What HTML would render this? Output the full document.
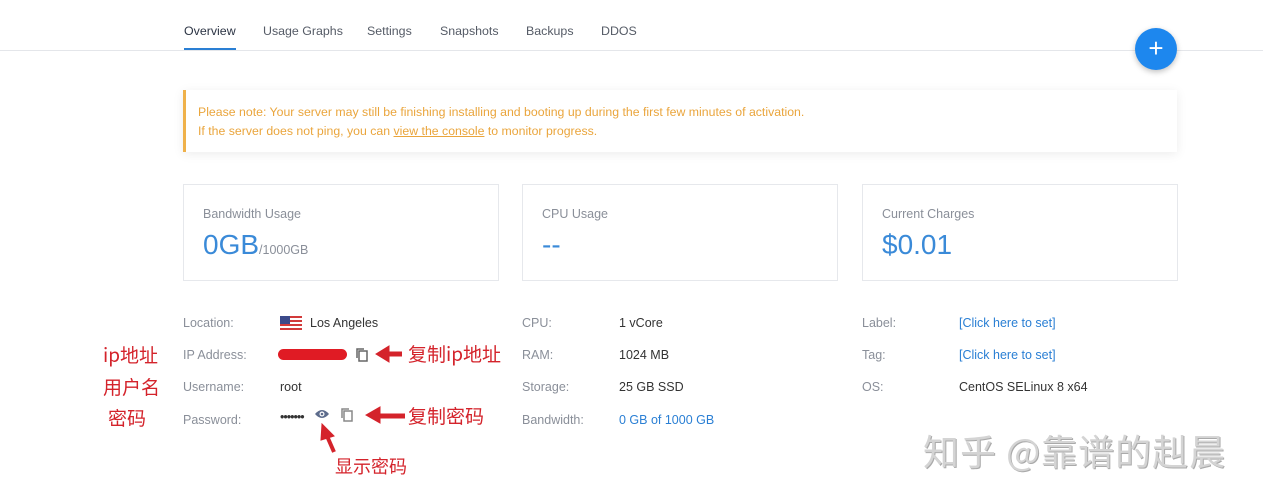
<!DOCTYPE html>
<html><head><meta charset="utf-8"><style>
*{margin:0;padding:0;box-sizing:border-box}
body{width:1263px;height:500px;background:#fff;font-family:"Liberation Sans","Noto Sans CJK SC",sans-serif;position:relative;overflow:hidden;color:#333}
.a{position:absolute;white-space:nowrap}
.tab{font-size:12.4px;color:#555b66;top:24px}
.lbl{font-size:12.5px;color:#8a8f99}
.val{font-size:12.5px;color:#333}
.card{position:absolute;top:184px;width:316px;height:97px;border:1px solid #e6e8ec;background:#fff}
.card .t{position:absolute;left:19px;top:22px;font-size:12.5px;color:#8a8f99}
.card .v{position:absolute;left:19px;top:44px;font-size:28px;color:#3a8ad8}
.red{color:#d4232b;font-family:"Noto Sans CJK SC",sans-serif}
.link{color:#2a7fd4}
</style></head><body>
<div class="a" style="left:0;top:50px;width:1263px;height:1px;background:#e4e6ea"></div>
<div class="a tab" style="left:184px;color:#2c3444">Overview</div>
<div class="a" style="left:184px;top:48px;width:52px;height:2px;background:#2a7fd4"></div>
<div class="a tab" style="left:263px">Usage Graphs</div>
<div class="a tab" style="left:367px">Settings</div>
<div class="a tab" style="left:440px">Snapshots</div>
<div class="a tab" style="left:526px">Backups</div>
<div class="a tab" style="left:601px">DDOS</div>
<div class="a" style="left:1135px;top:28px;width:42px;height:42px;border-radius:50%;background:#1d87ee;box-shadow:0 2px 6px rgba(0,0,0,.25);color:#fff;font-size:26px;line-height:40px;text-align:center">+</div>

<div class="a" style="left:183px;top:90px;width:994px;height:62px;border-left:3px solid #efb14a;box-shadow:0 2px 10px rgba(0,0,0,.08);background:#fff"></div>
<div class="a" style="left:198px;top:103px;font-size:12.3px;color:#eaa53c;line-height:19px">Please note: Your server may still be finishing installing and booting up during the first few minutes of activation.<br>If the server does not ping, you can <u>view the console</u> to monitor progress.</div>

<div class="card" style="left:183px"><div class="t">Bandwidth Usage</div><div class="v">0GB<span style="font-size:12.5px;color:#8a8f99">/1000GB</span></div></div>
<div class="card" style="left:522px"><div class="t">CPU Usage</div><div class="v">--</div></div>
<div class="card" style="left:862px"><div class="t">Current Charges</div><div class="v">$0.01</div></div>

<div class="a lbl" style="left:183px;top:316px">Location:</div>
<div class="a" style="left:280px;top:316px;width:22px;height:14px;background:repeating-linear-gradient(#d23a3a 0 2px,#fff 2px 4px)"><div style="width:10px;height:8px;background:#3c4a8a"></div></div>
<div class="a val" style="left:310px;top:316px">Los Angeles</div>
<div class="a lbl" style="left:183px;top:348px">IP Address:</div>
<div class="a" style="left:278px;top:349px;width:69px;height:11px;border-radius:6px;background:#e01b24"></div>
<svg class="a" style="left:355px;top:347px" width="14" height="16" viewBox="0 0 14 16"><rect x="4" y="4" width="8" height="10" fill="none" stroke="#666" stroke-width="1.5"/><path d="M2 11V2h7" fill="none" stroke="#666" stroke-width="1.5"/></svg>
<div class="a lbl" style="left:183px;top:380px">Username:</div>
<div class="a val" style="left:280px;top:380px">root</div>
<div class="a lbl" style="left:183px;top:413px">Password:</div>
<div class="a val" style="left:280px;top:410px;letter-spacing:-1px">•••••••</div>
<svg class="a" style="left:314px;top:408px" width="16" height="12" viewBox="0 0 16 12"><path d="M1 6Q8-2 15 6Q8 14 1 6Z" fill="#5d6c8c"/><circle cx="8" cy="6" r="2.5" fill="#fff"/><circle cx="8" cy="6" r="1.3" fill="#5d6c8c"/></svg>
<svg class="a" style="left:340px;top:407px" width="14" height="16" viewBox="0 0 14 16"><rect x="4" y="4" width="8" height="10" fill="none" stroke="#888" stroke-width="1.5"/><path d="M2 11V2h7" fill="none" stroke="#888" stroke-width="1.5"/></svg>

<div class="a lbl" style="left:522px;top:316px">CPU:</div><div class="a val" style="left:619px;top:316px">1 vCore</div>
<div class="a lbl" style="left:522px;top:348px">RAM:</div><div class="a val" style="left:619px;top:348px">1024 MB</div>
<div class="a lbl" style="left:522px;top:380px">Storage:</div><div class="a val" style="left:619px;top:380px">25 GB SSD</div>
<div class="a lbl" style="left:522px;top:413px">Bandwidth:</div><div class="a val link" style="left:619px;top:413px">0 GB of 1000 GB</div>

<div class="a lbl" style="left:862px;top:316px">Label:</div><div class="a val link" style="left:959px;top:316px">[Click here to set]</div>
<div class="a lbl" style="left:862px;top:348px">Tag:</div><div class="a val link" style="left:959px;top:348px">[Click here to set]</div>
<div class="a lbl" style="left:862px;top:380px">OS:</div><div class="a val" style="left:959px;top:380px">CentOS SELinux 8 x64</div>

<div class="a red" style="left:103px;top:341px;font-size:19px">ip地址</div>
<div class="a red" style="left:103px;top:373px;font-size:19px">用户名</div>
<div class="a red" style="left:108px;top:404px;font-size:19px">密码</div>
<div class="a red" style="left:408px;top:340px;font-size:19px">复制ip地址</div>
<div class="a red" style="left:408px;top:402px;font-size:19px">复制密码</div>
<div class="a red" style="left:335px;top:453px;font-size:18px">显示密码</div>
<svg class="a" style="left:0;top:0" width="1263" height="500"><g fill="#d4232b" stroke="#d4232b">
<path d="M402 354H386" stroke-width="5"/><path d="M376 354L389 346V362Z"/>
<path d="M405 416H378" stroke-width="5"/><path d="M366 415L380 407V423Z"/>
<path d="M334 452L327 436" stroke-width="4"/><path d="M322 424L334 436L321 440Z"/></g></svg>
<div class="a" style="left:923px;top:424px;font-size:36px;letter-spacing:1px;color:#d4d4d4;font-family:'Noto Sans CJK SC',sans-serif;text-shadow:1px 1px 0 #aaa">知乎 @靠谱的赳晨</div>
</body></html>
